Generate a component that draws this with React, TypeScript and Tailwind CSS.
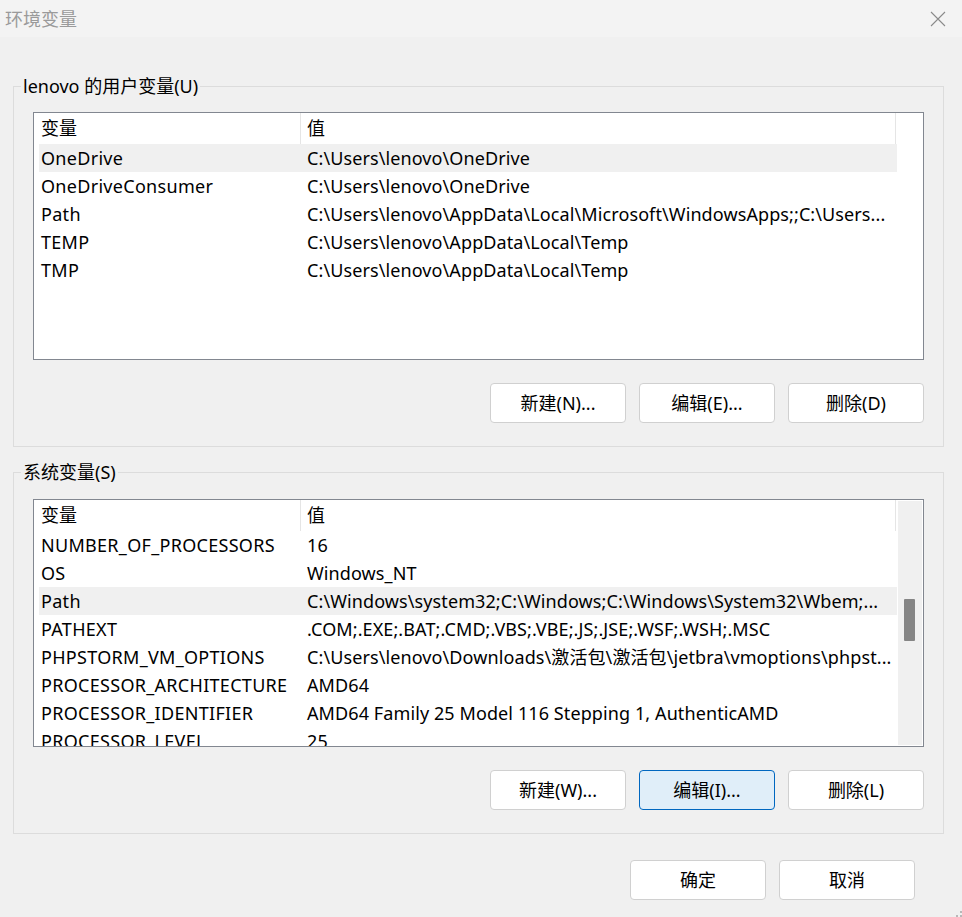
import React from "react";

type Row = { name: string; value: string };

const userVars: Row[] = [
    { name: "OneDrive", value: String.raw`C:\Users\lenovo\OneDrive` },
    { name: "OneDriveConsumer", value: String.raw`C:\Users\lenovo\OneDrive` },
    { name: "Path", value: String.raw`C:\Users\lenovo\AppData\Local\Microsoft\WindowsApps;;C:\Users...` },
    { name: "TEMP", value: String.raw`C:\Users\lenovo\AppData\Local\Temp` },
    { name: "TMP", value: String.raw`C:\Users\lenovo\AppData\Local\Temp` },
];

const systemVars: Row[] = [
    { name: "NUMBER_OF_PROCESSORS", value: "16" },
    { name: "OS", value: "Windows_NT" },
    { name: "Path", value: String.raw`C:\Windows\system32;C:\Windows;C:\Windows\System32\Wbem;...` },
    { name: "PATHEXT", value: ".COM;.EXE;.BAT;.CMD;.VBS;.VBE;.JS;.JSE;.WSF;.WSH;.MSC" },
    { name: "PHPSTORM_VM_OPTIONS", value: String.raw`C:\Users\lenovo\Downloads\激活包\激活包\jetbra\vmoptions\phpst...` },
    { name: "PROCESSOR_ARCHITECTURE", value: "AMD64" },
    { name: "PROCESSOR_IDENTIFIER", value: "AMD64 Family 25 Model 116 Stepping 1, AuthenticAMD" },
    { name: "PROCESSOR_LEVEL", value: "25" },
];

function WinButton({ label, focused = false }: { label: string; focused?: boolean }) {
    return (
        <button
            className={
                focused
                    ? "w-[136px] h-[40px] rounded-[4px] border border-[#0067c0] bg-[#e0eef9] flex items-center justify-center"
                    : "w-[136px] h-[40px] rounded-[4px] border border-[#d0d0d0] bg-white flex items-center justify-center"
            }
        >
            {label}
        </button>
    );
}

function VarList({ rows, selected, scrollbar = false }: { rows: Row[]; selected: number; scrollbar?: boolean }) {
    return (
        <div className="h-[248px] border border-[#828790] bg-white flex overflow-hidden">
            <div className="w-[863px] shrink-0 flex flex-col">
                {/* header */}
                <div className="h-[31px] shrink-0 flex">
                    <div className="w-[266px] pl-[7px] flex items-center">变量</div>
                    <div className="w-px bg-[#e5e5e5]"></div>
                    <div className="w-[594px] pl-[6px] flex items-center">值</div>
                    <div className="w-px bg-[#e5e5e5]"></div>
                </div>
                {rows.map((r, i) => (
                    <div
                        key={r.name}
                        className={
                            i === selected
                                ? "h-[28px] shrink-0 ml-[5px] flex items-center bg-[#f0f0f0] whitespace-nowrap"
                                : "h-[28px] shrink-0 ml-[5px] flex items-center whitespace-nowrap"
                        }
                    >
                        <div className="w-[268px] pl-[2px] shrink-0 tracking-[0.3px]">{r.name}</div>
                        <div className="flex-1 tracking-[0.1px]">{r.value}</div>
                    </div>
                ))}
            </div>
            {scrollbar ? (
                <div className="w-[26px] bg-[#f0f0f0] border border-white pt-[98px] pl-[6px]">
                    <div className="w-[11px] h-[42px] bg-[#858585] rounded-[1px]"></div>
                </div>
            ) : (
                <div className="w-[26px]"></div>
            )}
        </div>
    );
}

export default function App() {
    return (
        <div className="w-[962px] h-[917px] bg-[#f0f0f0] relative overflow-hidden text-[18px] text-black font-['Noto_Sans','Noto_Sans_CJK_SC',sans-serif]">
            {/* Title bar */}
            <div className="h-[37px] bg-[#f3f3f3] flex items-center justify-between pl-[5px] pr-[16px]">
                <span className="text-[#9a9a9a] leading-none">环境变量</span>
                <svg width="16" height="16" viewBox="0 0 16 16" className="mt-[1px]">
                    <path d="M1 1 L15 15 M15 1 L1 15" stroke="#8a8a8a" strokeWidth="1.1" fill="none" />
                </svg>
            </div>

            <div className="pl-[13px] pr-[18px]">
                {/* User variables */}
                <fieldset className="mt-[37px] border border-[#dcdcdc] px-[19px] pt-[14px] pb-[23px]">
                    <legend className="ml-[-12px] px-[2px] leading-[24px]">lenovo 的用户变量(U)</legend>
                    <VarList rows={userVars} selected={0} />
                    <div className="mt-[23px] flex justify-end gap-[13px]">
                        <WinButton label="新建(N)..." />
                        <WinButton label="编辑(E)..." />
                        <WinButton label="删除(D)" />
                    </div>
                </fieldset>

                {/* System variables */}
                <fieldset className="mt-[13px] border border-[#dcdcdc] px-[19px] pt-[15px] pb-[23px]">
                    <legend className="ml-[-12px] px-[2px] leading-[24px]">系统变量(S)</legend>
                    <VarList rows={systemVars} selected={2} scrollbar />
                    <div className="mt-[23px] flex justify-end gap-[13px]">
                        <WinButton label="新建(W)..." />
                        <WinButton label="编辑(I)..." focused />
                        <WinButton label="删除(L)" />
                    </div>
                </fieldset>
            </div>

            {/* Dialog buttons */}
            <div className="mt-[26px] pr-[47px] flex justify-end gap-[13px]">
                <WinButton label="确定" />
                <WinButton label="取消" />
            </div>

            {/* size grip */}
            <svg width="6" height="6" viewBox="0 0 6 6" className="absolute right-0 bottom-0">
                <rect x="4" y="0" width="2" height="2" fill="#b8b8b8" />
                <rect x="0" y="4" width="2" height="2" fill="#b8b8b8" />
                <rect x="4" y="4" width="2" height="2" fill="#b8b8b8" />
            </svg>
        </div>
    );
}
